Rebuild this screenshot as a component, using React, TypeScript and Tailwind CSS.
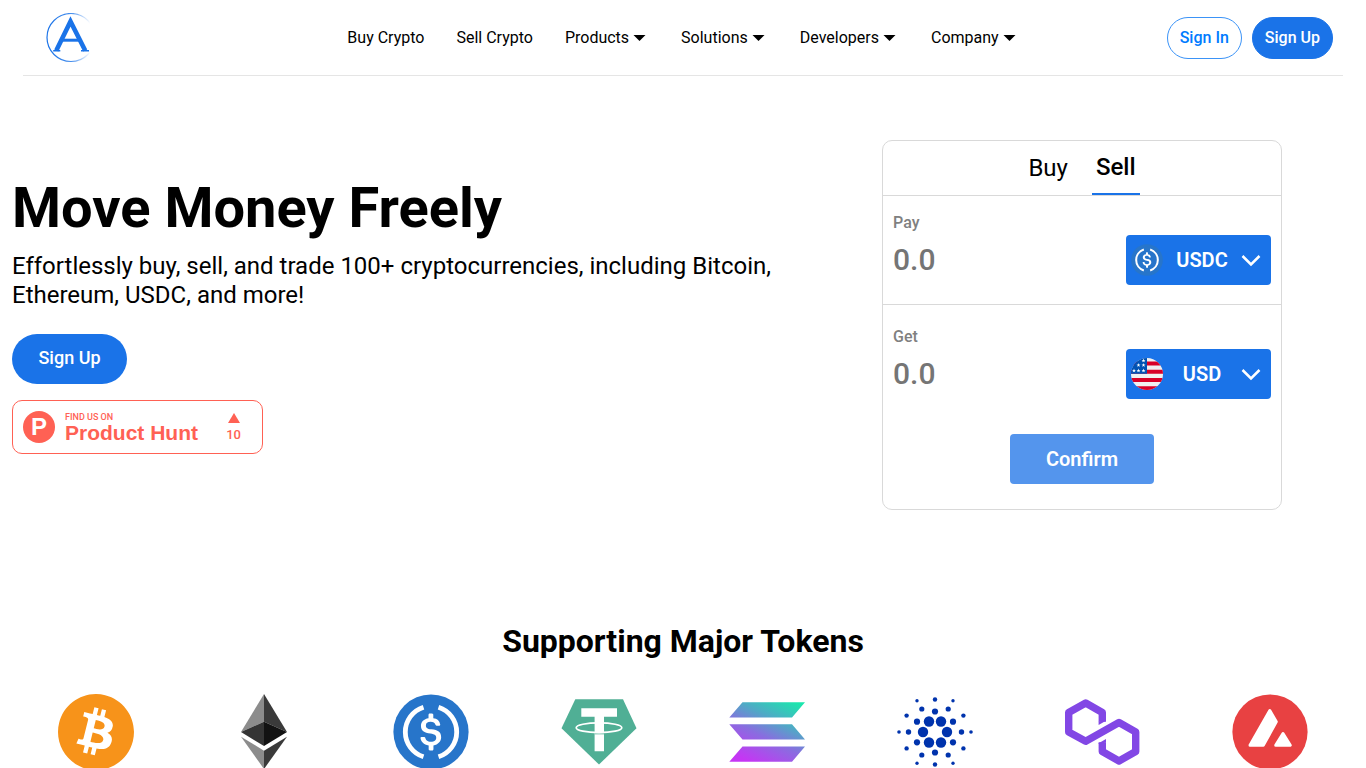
import type { ReactNode } from "react";
import { SiBitcoin } from "react-icons/si";

type MenuItem = { label: string; menu?: boolean };

const menuItems: MenuItem[] = [
  { label: "Buy Crypto" },
  { label: "Sell Crypto" },
  { label: "Products", menu: true },
  { label: "Solutions", menu: true },
  { label: "Developers", menu: true },
  { label: "Company", menu: true },
];

function Logo() {
  return (
    <svg viewBox="0 0 50 50" className="size-[50px]" aria-hidden="true">
      <defs>
        <linearGradient id="ring" x1="0" y1="0" x2="1" y2="0">
          <stop offset="0" stopColor="#1a73e8" />
          <stop offset="0.5" stopColor="#1a73e8" stopOpacity="0.8" />
          <stop offset="0.9" stopColor="#1a73e8" stopOpacity="0" />
        </linearGradient>
      </defs>
      <circle cx="25" cy="24.500" r="24" fill="none" stroke="url(#ring)" strokeWidth="1.200" />
      <g fill="none" stroke="#1a73e8">
        <path d="M10.300 37.500 24.500 8.500 39.200 37.500" strokeWidth="4.600" strokeMiterlimit="10" />
        <path d="M15.500 27.200H34" strokeWidth="3" />
        <path d="M7.200 37.700H14.300M35 37.700H43" strokeWidth="1.400" />
      </g>
    </svg>
  );
}

function Chevron() {
  return (
    <svg viewBox="0 0 20 20" className="pointer-events-none size-5 shrink-0" aria-hidden="true">
      <path d="m1.500 6 8.500 8.500L18.500 6" fill="none" stroke="#fff" strokeWidth="2.500" />
    </svg>
  );
}

function Usdc({ className }: { className: string }) {
  return (
    <svg viewBox="0 0 76 76" className={className} aria-hidden="true">
      <circle cx="38" cy="38" r="37.600" fill="#2775ca" />
      <path
        d="M30.500 13.200A26 26 0 0 0 30.500 62.800M45.500 13.200A26 26 0 0 1 45.500 62.800"
        fill="none"
        stroke="#fff"
        strokeWidth="4.800"
      />
      <path
        fill="#fff"
        transform="translate(-2.500 -2.500) scale(2.530)"
        d="M20.022 18.124c0-2.124-1.28-2.852-3.84-3.156-1.828-.243-2.193-.728-2.193-1.578 0-.85.61-1.396 1.828-1.396 1.097 0 1.707.364 2.011 1.275a.458.458 0 00.427.303h.975a.416.416 0 00.427-.425v-.06a3.04 3.04 0 00-2.743-2.489V9.142c0-.243-.183-.425-.487-.486h-.915c-.243 0-.426.182-.487.486v1.396c-1.829.242-2.986 1.456-2.986 2.974 0 2.002 1.218 2.791 3.778 3.095 1.707.303 2.255.668 2.255 1.639 0 .97-.853 1.638-2.011 1.638-1.585 0-2.133-.667-2.316-1.578-.06-.242-.244-.364-.427-.364h-1.036a.416.416 0 00-.426.425v.06c.243 1.518 1.219 2.61 3.23 2.914v1.457c0 .242.183.425.487.485h.915c.243 0 .426-.182.487-.485V21.34c1.829-.303 3.047-1.578 3.047-3.217z"
      />
    </svg>
  );
}

const stars = [
  [12.5, 2.5], [7.5, 7], [12.5, 7], [3, 12.5], [7.5, 12.5], [12.5, 12.5],
];

function UsFlag() {
  return (
    <svg viewBox="0 0 32 32" className="size-8 shrink-0" aria-hidden="true">
      <clipPath id="flag">
        <circle cx="16" cy="16" r="16" />
      </clipPath>
      <g clipPath="url(#flag)">
        <path fill="#f0f0f0" d="M0 0h32v32H0z" />
        <path fill="#d80027" d="M0 3.500h32v4H0zM0 11.800h32v4H0zM0 20h32v4H0zM0 28.300h32v4H0z" />
        <path fill="#0052b4" d="M0 0h16v15.800H0z" />
        {stars.map(([x, y]) => (
          <path
            key={`${x}-${y}`}
            fill="#fff"
            transform={`translate(${x} ${y})`}
            d="m0-2 .5 1.400h1.500L.8.300l.5 1.500L0 .9l-1.300.9.5-1.500L-2-.600h1.500z"
          />
        ))}
      </g>
    </svg>
  );
}

function Bitcoin() {
  return (
    <div className="size-[76px] rounded-full bg-[radial-gradient(circle,white_60%,transparent_62%)]">
      <SiBitcoin className="size-full text-[#f7931a]" />
    </div>
  );
}

function Ethereum() {
  return (
    <svg viewBox="0 0 76 76" className="size-[76px]" aria-hidden="true">
      <path fill="#8c8c8c" d="M38 0v27.700L15 38z" />
      <path fill="#3a3a3a" d="M38 0v27.700L61 38z" />
      <path fill="#343434" d="M38 27.700V52L15 38z" />
      <path fill="#121212" d="M38 27.700V52l23-14z" />
      <path fill="#8c8c8c" d="m15 42.700 23 14V75z" />
      <path fill="#3a3a3a" d="m61 42.700-23 14V75z" />
    </svg>
  );
}

function Tether() {
  return (
    <svg viewBox="0 0 76 76" className="size-[76px]" aria-hidden="true">
      <path fill="#50af95" d="M14.300 5.300H62l13.500 29L38 70.500.5 34.300z" />
      <path fill="#fff" d="M20.300 14.300H56v8.400H43v34.600h-9.400V22.700H20.300z" />
      <path d="M33.600 39.800h9.400" stroke="#50af95" strokeWidth="1" />
      <ellipse cx="38" cy="33.700" rx="22.800" ry="4.900" fill="none" stroke="#fff" strokeWidth="1.700" />
    </svg>
  );
}

function Solana() {
  return (
    <svg viewBox="0 0 76 76" className="size-[76px]" aria-hidden="true">
      <defs>
        <linearGradient id="solana" gradientUnits="userSpaceOnUse" x1="18" y1="76" x2="54" y2="2">
          <stop offset="0.100" stopColor="#c536f4" />
          <stop offset="0.450" stopColor="#8a6ce0" />
          <stop offset="0.700" stopColor="#50a9c6" />
          <stop offset="1" stopColor="#1be6ad" />
        </linearGradient>
      </defs>
      <path
        fill="url(#solana)"
        d="M13.500 8.300H76L63 23.500H.3zM.3 30.200H63l13 15.300H13.500zM13.500 52.500H76L63 67.800H.3z"
      />
    </svg>
  );
}

// Each entry is [dx, dy, r]; the dot is mirrored in both axes around the centre.
const cardanoDots = [
  [12, 0, 5.2], [6, 10.5, 5.2],
  [0, 20.5, 3.1], [18, 10.3, 3.1],
  [13.2, 23, 2.6], [26.5, 0, 2.7],
  [28.4, 16.4, 2.2], [0, 32.5, 2.2],
  [18, 31.3, 1.7], [36, 0, 1.8],
];

function Cardano() {
  const mirrored = cardanoDots.flatMap(([x, y, r]) => {
    const xs = x === 0 ? [0] : [-x, x];
    const ys = y === 0 ? [0] : [-y, y];
    return xs.flatMap((cx) => ys.map((cy) => ({ cx, cy, r })));
  });
  return (
    <svg viewBox="-38 -38 76 76" className="size-[76px]" fill="#0033ad" aria-hidden="true">
      {mirrored.map((dot) => (
        <circle key={`${dot.cx},${dot.cy}`} cx={dot.cx} cy={dot.cy} r={dot.r} />
      ))}
    </svg>
  );
}

function Polygon() {
  return (
    <svg viewBox="0 0 76 76" className="size-[76px]" aria-hidden="true">
      <path
        d="M38.300 27.700V18.500L21.700 9 4.700 18.500V38l17 9.300L55 28.500 71.700 38v19.500L55 67l-16.700-9.500V48.300"
        fill="none"
        stroke="#8247e5"
        strokeWidth="7.400"
        strokeLinejoin="round"
      />
      <path fill="#8247e5" d="M34.600 27.500v3.400l7.400-4.200v-.8zM42 48.500v-3.400l-7.400 4.200v.8z" />
    </svg>
  );
}

function Avalanche() {
  return (
    <svg viewBox="0 0 76 76" className="size-[76px]" aria-hidden="true">
      <circle cx="38" cy="38" r="37.600" fill="#e84142" />
      <g fill="#fff" stroke="#fff" strokeWidth="3" strokeLinejoin="round">
        <path d="M37.800 16.500 44.300 27.800 31.300 51.300H18z" />
        <path d="m51 39.500 7.300 11.800H43.700z" />
      </g>
    </svg>
  );
}

const tokens: { name: string; icon: ReactNode }[] = [
  { name: "Bitcoin", icon: <Bitcoin /> },
  { name: "Ethereum", icon: <Ethereum /> },
  { name: "USDC", icon: <Usdc className="size-[76px]" /> },
  { name: "Tether", icon: <Tether /> },
  { name: "Solana", icon: <Solana /> },
  { name: "Cardano", icon: <Cardano /> },
  { name: "Polygon", icon: <Polygon /> },
  { name: "Avalanche", icon: <Avalanche /> },
];

function Header() {
  return (
    <header className="mx-[23px] grid grid-cols-[1fr_auto_1fr] items-center border-b border-[#e5e5e5] px-[10px] pt-[13px] pb-3">
      <a href="#home" aria-label="Home" className="justify-self-start pl-[13px]">
        <Logo />
      </a>
      <nav className="flex items-center gap-8">
        {menuItems.map((item) =>
          item.menu ? (
            <button key={item.label} type="button" className="flex items-center gap-1">
              {item.label}
              <svg viewBox="0 0 16 16" className="size-4" aria-hidden="true">
                <path d="M.5 5h12l-6 6z" />
              </svg>
            </button>
          ) : (
            <a key={item.label} href="#trade">
              {item.label}
            </a>
          ),
        )}
      </nav>
      <div className="flex gap-[10px] justify-self-end font-medium">
        <a href="#signin" className="rounded-full border border-[#3b93f7] px-3 py-2 text-[#007bff]">
          Sign In
        </a>
        <a href="#signup" className="rounded-full border border-[#1a73e8] bg-[#1a73e8] px-3 py-2 text-white">
          Sign Up
        </a>
      </div>
    </header>
  );
}

function ProductHunt() {
  return (
    <a
      href="#product-hunt"
      className="mt-4 flex h-[54px] w-[251px] items-center rounded-[10px] border border-[#ff6154] pr-[21px] pl-[10px] text-[#ff6154]"
    >
      <span className="flex size-8 items-center justify-center rounded-full bg-[#ff6154] font-['Liberation_Sans',sans-serif] text-2xl font-bold text-white">
        P
      </span>
      <span className="ml-[10px] flex flex-1 flex-col">
        <span className="text-[9px] leading-3 font-medium">FIND US ON</span>
        <span className="font-['Liberation_Sans',sans-serif] text-[21px] leading-5 font-bold">Product Hunt</span>
      </span>
      <span className="flex flex-col items-center gap-1 pt-0.5 text-[13px] leading-4 font-medium">
        <svg viewBox="0 0 12 10" className="h-[10px] w-3" aria-hidden="true">
          <path d="M6 0 12 10H0z" fill="#ff6154" />
        </svg>
        10
      </span>
    </a>
  );
}

type AmountProps = { id: string; label: string; currency: string; icon: ReactNode };

function Amount({ id, label, currency, icon }: AmountProps) {
  return (
    <div className="flex items-start justify-between px-[10px]">
      <div className="flex flex-col">
        <label htmlFor={id} className="font-medium text-[#808080]">
          {label}
        </label>
        <input
          id={id}
          placeholder="0.0"
          className="mt-1 h-10 w-48 text-[30px] font-medium outline-none placeholder:text-[#757575]"
        />
      </div>
      <div className="mt-6 flex h-[50px] w-[145px] items-center rounded bg-[#1a73e8] pr-[10px] pl-[5px] text-white">
        {icon}
        <select
          aria-label={`${label} currency`}
          defaultValue={currency}
          className="w-0 flex-1 appearance-none bg-transparent text-center text-xl font-semibold outline-none"
        >
          <option>{currency}</option>
        </select>
        <Chevron />
      </div>
    </div>
  );
}

function TradeCard() {
  return (
    <form className="w-[400px] shrink-0 rounded-[10px] border border-[#d9d9d9]">
      <div className="flex h-[55px] justify-center gap-6 border-b border-[#d9d9d9] pl-1 text-2xl">
        <button type="button">Buy</button>
        <button type="button" className="border-b-2 border-[#1a73e8] px-1 font-medium">
          Sell
        </button>
      </div>
      <div className="border-b border-[#d9d9d9] pt-[15px] pb-[19px]">
        <Amount id="pay" label="Pay" currency="USDC" icon={<Usdc className="size-8 shrink-0" />} />
      </div>
      <div className="pt-5">
        <Amount id="get" label="Get" currency="USD" icon={<UsFlag />} />
      </div>
      <div className="flex justify-center pt-[35px] pb-[25px]">
        <button type="button" className="h-[50px] w-36 rounded bg-[#5495ed] text-xl font-semibold text-white">
          Confirm
        </button>
      </div>
    </form>
  );
}

export default function App() {
  return (
    <div className="h-screen overflow-x-hidden overflow-y-auto bg-white font-[Roboto,sans-serif] text-base text-black [scrollbar-width:none]">
      <Header />
      <main>
        <section className="flex items-start justify-between pt-16 pr-[84px] pl-3">
          <div className="flex max-w-[790px] flex-col items-start pt-9">
            <h1 className="text-[56px] leading-[64px] font-bold">Move Money Freely</h1>
            <p className="mt-3 text-2xl leading-[29px]">
              Effortlessly buy, sell, and trade 100+ cryptocurrencies, including Bitcoin, Ethereum, USDC, and more!
            </p>
            <a
              href="#signup"
              className="mt-6 flex h-[50px] w-[115px] items-center justify-center rounded-full bg-[#1a73e8] pb-0.5 text-lg font-medium text-white"
            >
              Sign Up
            </a>
            <ProductHunt />
          </div>
          <TradeCard />
        </section>
        <section className="px-3 pt-[111px]">
          <h2 className="text-center text-[32px] leading-10 font-bold">Supporting Major Tokens</h2>
          <ul className="mt-[33px] grid grid-cols-8 justify-items-center">
            {tokens.map((token) => (
              <li key={token.name} role="img" aria-label={token.name}>
                {token.icon}
              </li>
            ))}
          </ul>
        </section>
      </main>
    </div>
  );
}
